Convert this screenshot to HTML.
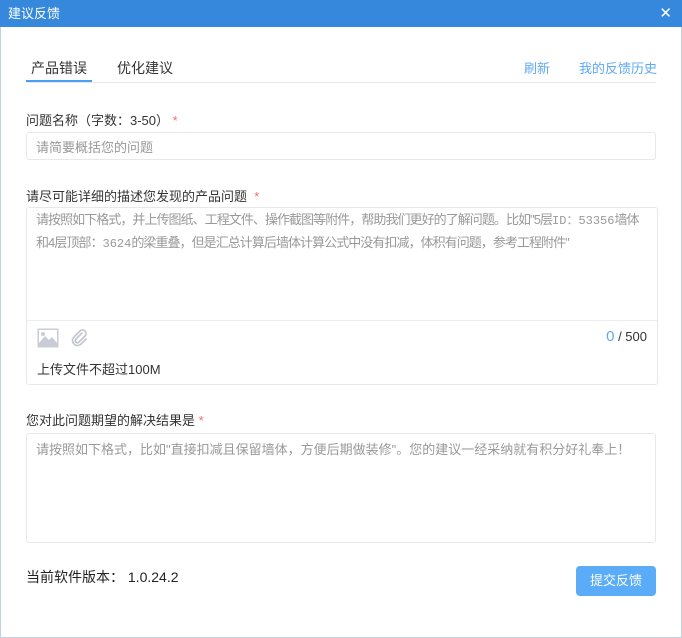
<!DOCTYPE html>
<html><head><meta charset="utf-8"><style>
*{margin:0;padding:0;box-sizing:border-box}
body{width:682px;height:638px;overflow:hidden;background:#fff;font-family:"Liberation Sans","Noto Sans CJK SC",sans-serif;font-size:13px;color:#333;position:relative}
.win{position:absolute;left:0;top:0;width:682px;height:638px;border:1px solid #c3d0de;border-top:none}
.title{position:absolute;left:0;top:0;width:682px;height:27px;background:#3588dc;color:#fff;font-size:13px;line-height:27px;padding-left:8px}
.x{position:absolute;right:10px;top:0;font-size:15px}
.a{position:absolute;white-space:nowrap}
.box{position:absolute;border:1px solid #e6e8eb;border-radius:3px}
.ph{color:#999;font-size:13px}
.star{color:#f56c6c}
.m{font-family:"Liberation Mono",monospace;font-size:12px;letter-spacing:0}
</style></head><body>
<div class="win"></div>
<div class="title">建议反馈<span class="x">✕</span></div>
<div class="a" style="left:31px;top:58px;font-size:14px;color:#333">产品错误</div>
<div class="a" style="left:117px;top:58px;font-size:14px;color:#333">优化建议</div>
<div class="a" style="left:26px;top:80px;width:66px;height:2px;background:#4a9ff5"></div>
<div class="a" style="left:26px;top:82px;width:630px;height:1px;background:#e4e7ed"></div>
<div class="a" style="left:524px;top:58px;color:#5ea8f5">刷新</div>
<div class="a" style="left:579px;top:58px;color:#5ea8f5">我的反馈历史</div>
<div class="a" style="left:26px;top:110px">问题名称（字数：3-50） <span class="star">*</span></div>
<div class="box" style="left:26px;top:132px;width:630px;height:28px"><span class="a ph" style="left:9px;top:4px">请简要概括您的问题</span></div>
<div class="a" style="left:26px;top:186px">请尽可能详细的描述您发现的产品问题 &nbsp;<span class="star">*</span></div>
<div class="box" style="left:26px;top:207px;width:632px;height:178px">
<div class="a ph" style="left:9px;top:1px;line-height:21px;letter-spacing:-0.95px">请按照如下格式，并上传图纸、工程文件、操作截图等附件，帮助我们更好的了解问题。比如"5层<span class="m">ID：53356</span>墙体<br>和4层顶部：<span class="m">3624</span>的梁重叠，但是汇总计算后墙体计算公式中没有扣减，体积有问题，参考工程附件"</div>
<div class="a" style="left:0;top:112px;width:630px;height:1px;background:#eceef1"></div>
<svg class="a" style="left:10px;top:120px" width="22" height="20" viewBox="0 0 22 20"><rect x="0.5" y="0.5" width="21" height="19" fill="#c9ccd6"/><rect x="2" y="2" width="18" height="13" fill="#fff"/><circle cx="6" cy="6" r="2" fill="#c9ccd6"/><path d="M2 15 L8 8 L12 12 L15 9 L20 15Z" fill="#c9ccd6"/></svg>
<svg class="a" style="left:44px;top:121px" width="18" height="18" viewBox="0 0 18 18"><path d="M11 4 L4.5 10.5 a2.2 2.2 0 0 0 3 3 L14 7 a3.5 3.5 0 0 0 -5 -5 L2.5 8.5 a5 5 0 0 0 7 7 L15 10" fill="none" stroke="#c2c5cf" stroke-width="1.6" stroke-linecap="round"/></svg>
<div class="a" style="right:10px;top:120px;font-size:13px"><span style="color:#5ea8f5;font-size:15px">0</span> / 500</div>
<div class="a" style="left:10px;top:151px">上传文件不超过100M</div>
</div>
<div class="a" style="left:26px;top:410px">您对此问题期望的解决结果是 <span class="star">*</span></div>
<div class="box" style="left:26px;top:433px;width:630px;height:110px"><span class="a ph" style="left:9px;top:5px">请按照如下格式，比如"直接扣减且保留墙体，方便后期做装修"。您的建议一经采纳就有积分好礼奉上！</span></div>
<div class="a" style="left:26px;top:567px;font-size:14px;color:#222">当前软件版本： 1.0.24.2</div>
<div class="a" style="left:576px;top:566px;width:80px;height:30px;background:#5aabf8;border-radius:4px;color:#fff;text-align:center;line-height:30px">提交反馈</div>
</body></html>
